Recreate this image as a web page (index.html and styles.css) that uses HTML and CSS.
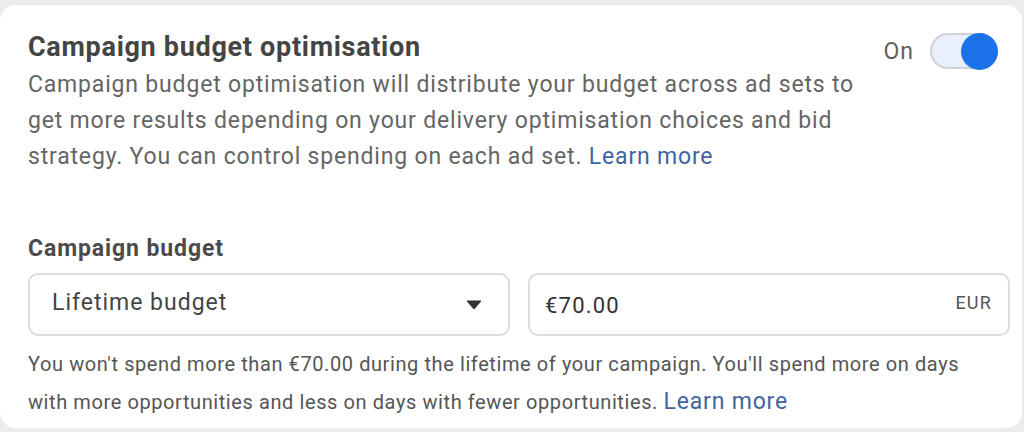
FILE: index.html
```html
<!DOCTYPE html>
<html lang="en">
<head>
<meta charset="utf-8">
<title>Campaign budget optimisation</title>
<link rel="stylesheet" href="styles.css">
</head>
<body>
<div class="card">
  <div class="header">
    <div class="intro">
      <h2 class="title">Campaign budget optimisation</h2>
      <p class="desc">Campaign budget optimisation will distribute your budget across ad sets to get more results depending on your delivery optimisation choices and bid strategy. You can control spending on each ad set. <a class="link" href="#">Learn more</a></p>
    </div>
    <div class="switch-wrap">
      <span class="switch-label">On</span>
      <span class="switch"><span class="knob"></span></span>
    </div>
  </div>

  <div class="budget">
    <div class="label">Campaign budget</div>
    <div class="fields">
      <div class="field select">
        <span class="field-text">Lifetime budget</span>
        <svg class="caret" width="16" height="10" viewBox="0 0 16 10"><path d="M1 1.5 Q0.3 0.5 1.5 0.5 H14.5 Q15.7 0.5 15 1.5 L8.8 8.8 Q8 9.6 7.2 8.8 Z" fill="#333"/></svg>
      </div>
      <div class="field amount">
        <span class="amount-text">€70.00</span>
        <span class="currency">EUR</span>
      </div>
    </div>
    <p class="help">You won't spend more than €70.00 during the lifetime of your campaign. You'll spend more on days with more opportunities and less on days with fewer opportunities. <a class="link link-lg" href="#">Learn more</a></p>
  </div>
</div>
</body>
</html>
```

FILE: styles.css
```css
html, body {
  margin: 0;
  padding: 0;
  background: #ececec;
  height: 432px;
  overflow: hidden;
}
body {
  padding-top: 5px;
  font-family: Roboto, "Liberation Sans", Arial, sans-serif;
}
.card {
  background: #fff;
  margin-right: 2px;
  border-radius: 16px;
  padding: 24px 12px 8px 28px;
  height: 423px;
  box-sizing: border-box;
}
.header {
  display: flex;
  justify-content: space-between;
  align-items: flex-start;
}
.intro {
  width: 845px;
}
.title {
  margin: 0;
  font-size: 27px;
  line-height: 36px;
  font-weight: 700;
  letter-spacing: 0.7px;
  color: #444;
}
.desc {
  margin: 2px 0 0;
  font-size: 23px;
  line-height: 36px;
  letter-spacing: 0.82px;
  color: #656565;
}
.link {
  color: #3f64a0;
  text-decoration: none;
}
.link-lg {
  font-size: 23px;
  letter-spacing: 0.82px;
}
.switch-wrap {
  display: flex;
  align-items: center;
  gap: 16px;
  margin-top: 4px;
  margin-right: 12px;
}
.switch-label {
  font-size: 23px;
  letter-spacing: 1px;
  color: #606060;
}
.switch {
  width: 68px;
  height: 36px;
  box-sizing: border-box;
  border: 2px solid #cfd3d8;
  background: #e7f0fb;
  border-radius: 18px;
  display: flex;
  justify-content: flex-end;
  align-items: center;
}
.knob {
  width: 37px;
  height: 37px;
  border-radius: 50%;
  background: #1b72e8;
  margin-right: -2px;
}
.budget {
  margin-top: 60px;
}
.label {
  font-size: 23px;
  line-height: 28px;
  font-weight: 700;
  letter-spacing: 0.9px;
  color: #4b4b4b;
}
.fields {
  display: grid;
  grid-template-columns: 1fr 1fr;
  gap: 18px;
  margin-top: 10px;
}
.field {
  height: 63px;
  box-sizing: border-box;
  border: 2px solid #dcdcdc;
  border-radius: 10px;
  display: flex;
  align-items: center;
  justify-content: space-between;
}
.select {
  padding: 0 26px 0 22px;
}
.field-text {
  font-size: 23px;
  letter-spacing: 1px;
  color: #444;
  margin-top: -4px;
}
.caret {
  display: block;
}
.amount {
  padding: 0 16px 0 15px;
}
.amount-text {
  font-size: 22px;
  letter-spacing: 1.2px;
  color: #333;
  margin-top: 2px;
}
.currency {
  font-size: 18px;
  letter-spacing: 1.2px;
  color: #555;
  margin-top: -4px;
}
.help {
  margin: 10px 0 0;
  max-width: 950px;
  font-size: 20px;
  line-height: 37px;
  letter-spacing: 0.59px;
  color: #555;
}
```
